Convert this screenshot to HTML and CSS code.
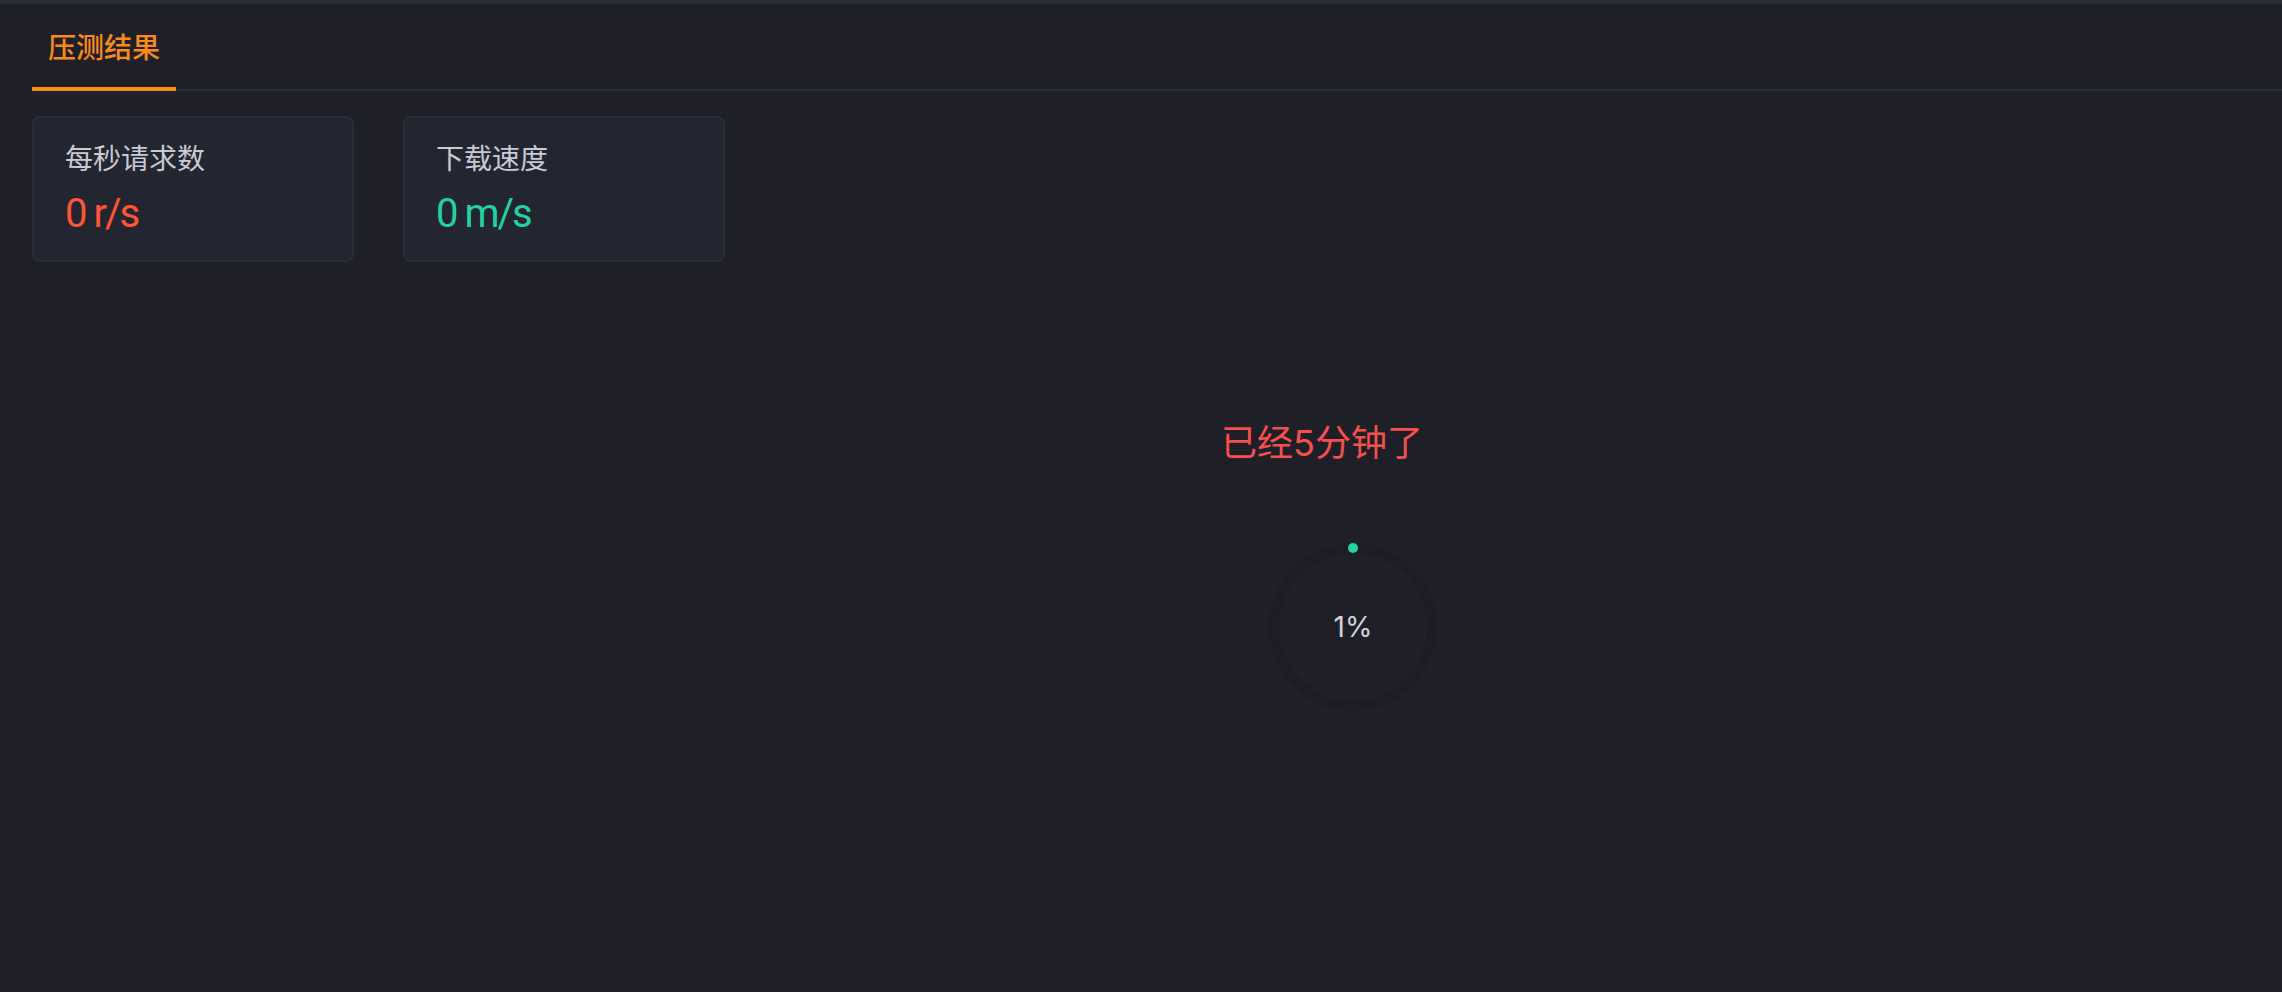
FILE: index.html
```html
<!DOCTYPE html>
<html lang="zh-CN">
<head>
<meta charset="utf-8">
<title>压测结果</title>
<link rel="stylesheet" href="styles.css">
</head>
<body>
<div class="page">
  <div class="tabs">
    <div class="tab active">压测结果</div>
  </div>
  <div class="cards">
    <div class="card">
      <div class="card-label">每秒请求数</div>
      <div class="card-value red">0 r/s</div>
    </div>
    <div class="card">
      <div class="card-label">下载速度</div>
      <div class="card-value green">0 m/s</div>
    </div>
  </div>
  <div class="status">
    <div class="status-text">已经5分钟了</div>
    <div class="ring">
      <svg class="ring-svg" width="168" height="168" viewBox="0 0 168 168">
        <circle cx="84" cy="84" r="79" fill="none" stroke="#1c1d24" stroke-width="10"/>
        <circle cx="84" cy="84" r="79" fill="none" stroke="#22d3a0" stroke-width="10" stroke-linecap="round" stroke-dasharray="0.01 600" transform="rotate(-90 84 84)"/>
      </svg>
      <div class="ring-label">1%</div>
    </div>
  </div>
</div>
</body>
</html>
```

FILE: styles.css
```css
html, body {
  margin: 0;
  padding: 0;
  background: #1f1f28;
}
body {
  border-top: 4px solid #2a2d39;
  min-height: 988px;
  font-family: "Noto Sans CJK SC", sans-serif;
}
.page {
  padding: 0 32px;
}
.tabs {
  display: flex;
  border-bottom: 2px solid #2a2c38;
  margin-right: -32px;
}
.tab {
  font-size: 28px;
  line-height: 40px;
  padding: 22px 16px 21px;
  margin-bottom: -2px;
  border-bottom: 4px solid transparent;
  color: #c9cad3;
  font-weight: 500;
}
.tab.active {
  color: #fa8c16;
  border-bottom-color: #fa8c16;
}
.cards {
  display: flex;
  gap: 49px;
  margin-top: 25px;
}
.card {
  width: 322px;
  box-sizing: border-box;
  height: 146px;
  border: 2px solid #2a2c38;
  border-radius: 8px;
  background: #232530;
  padding: 19px 31px 0;
}
.card-label {
  font-size: 28px;
  line-height: 40px;
  color: #c9cad3;
}
.card-value {
  margin-top: 13px;
  font-family: Roboto, "Noto Sans CJK SC", sans-serif;
  font-size: 40px;
  line-height: 48px;
  letter-spacing: -2px;
}
.red { color: #ff5533; }
.green { color: #22d3a0; }
.status {
  display: flex;
  flex-direction: column;
  align-items: center;
  padding-left: 424px;
  margin-top: 156px;
}
.status-text {
  font-family: Inter, "Noto Sans CJK SC", sans-serif;
  font-size: 36px;
  line-height: 50px;
  color: #f5504f;
  margin-right: 62px;
}
.ring {
  margin-top: 75px;
  display: grid;
  place-items: center;
}
.ring-svg, .ring-label {
  grid-area: 1 / 1;
}
.ring-svg {
  display: block;
}
.ring-label {
  font-family: Inter, sans-serif;
  font-size: 28px;
  line-height: 40px;
  color: #d1d2da;
}
```
